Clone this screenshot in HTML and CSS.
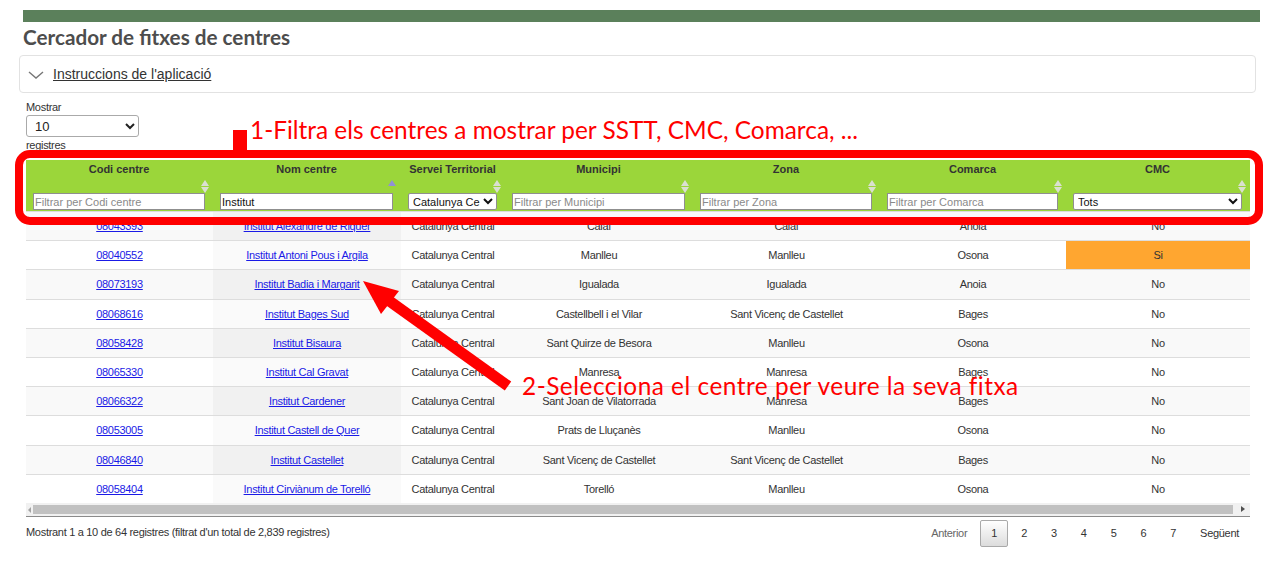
FILE: index.html
```html
<!DOCTYPE html>
<html lang="ca">
<head>
<meta charset="utf-8">
<title>Cercador de fitxes de centres</title>
<link rel="stylesheet" href="styles.css">
</head>
<body>
<div class="page">
  <div class="topbar"></div>
  <h1 class="title">Cercador de fitxes de centres</h1>
  <div class="accordion">
    <svg class="chev" width="16" height="8" viewBox="0 0 16 8"><path d="M1 1 L8 7 L15 1" fill="none" stroke="#777" stroke-width="1.4"/></svg>
    <a class="acc-link" href="#">Instruccions de l'aplicació</a>
  </div>
  <div class="length">
    <span>Mostrar</span>
    <select class="len-select"><option>10</option><option>25</option><option>50</option></select>
    <span>registres</span>
  </div>
  <div class="tablewrap">
    <table class="grid">
      <colgroup>
        <col style="width:187px"><col style="width:188px"><col style="width:104px"><col style="width:188px"><col style="width:187px"><col style="width:186px"><col style="width:184px">
      </colgroup>
      <thead>
        <tr>
          <th class="sort-both"><span class="ttl">Codi centre</span><input class="flt" placeholder="Filtrar per Codi centre"></th>
          <th class="sort-asc"><span class="ttl">Nom centre</span><input class="flt" value="Institut"></th>
          <th class="sort-both"><span class="ttl">Servei Territorial</span><select class="flt fsel"><option>Catalunya Central</option></select></th>
          <th class="sort-both"><span class="ttl">Municipi</span><input class="flt" placeholder="Filtrar per Municipi"></th>
          <th class="sort-both"><span class="ttl">Zona</span><input class="flt" placeholder="Filtrar per Zona"></th>
          <th class="sort-both"><span class="ttl">Comarca</span><input class="flt" placeholder="Filtrar per Comarca"></th>
          <th class="sort-both"><span class="ttl">CMC</span><select class="flt fsel"><option>Tots</option></select></th>
        </tr>
      </thead>
      <tbody>
        <tr><td><a href="#">08043393</a></td><td class="s1"><a href="#">Institut Alexandre de Riquer</a></td><td>Catalunya Central</td><td>Calaf</td><td>Calaf</td><td>Anoia</td><td>No</td></tr>
        <tr><td><a href="#">08040552</a></td><td class="s1"><a href="#">Institut Antoni Pous i Argila</a></td><td>Catalunya Central</td><td>Manlleu</td><td>Manlleu</td><td>Osona</td><td class="si">Si</td></tr>
        <tr><td><a href="#">08073193</a></td><td class="s1"><a href="#">Institut Badia i Margarit</a></td><td>Catalunya Central</td><td>Igualada</td><td>Igualada</td><td>Anoia</td><td>No</td></tr>
        <tr><td><a href="#">08068616</a></td><td class="s1"><a href="#">Institut Bages Sud</a></td><td>Catalunya Central</td><td>Castellbell i el Vilar</td><td>Sant Vicenç de Castellet</td><td>Bages</td><td>No</td></tr>
        <tr><td><a href="#">08058428</a></td><td class="s1"><a href="#">Institut Bisaura</a></td><td>Catalunya Central</td><td>Sant Quirze de Besora</td><td>Manlleu</td><td>Osona</td><td>No</td></tr>
        <tr><td><a href="#">08065330</a></td><td class="s1"><a href="#">Institut Cal Gravat</a></td><td>Catalunya Central</td><td>Manresa</td><td>Manresa</td><td>Bages</td><td>No</td></tr>
        <tr><td><a href="#">08066322</a></td><td class="s1"><a href="#">Institut Cardener</a></td><td>Catalunya Central</td><td>Sant Joan de Vilatorrada</td><td>Manresa</td><td>Bages</td><td>No</td></tr>
        <tr><td><a href="#">08053005</a></td><td class="s1"><a href="#">Institut Castell de Quer</a></td><td>Catalunya Central</td><td>Prats de Lluçanès</td><td>Manlleu</td><td>Osona</td><td>No</td></tr>
        <tr><td><a href="#">08046840</a></td><td class="s1"><a href="#">Institut Castellet</a></td><td>Catalunya Central</td><td>Sant Vicenç de Castellet</td><td>Sant Vicenç de Castellet</td><td>Bages</td><td>No</td></tr>
        <tr><td><a href="#">08058404</a></td><td class="s1"><a href="#">Institut Cirviànum de Torelló</a></td><td>Catalunya Central</td><td>Torelló</td><td>Manlleu</td><td>Osona</td><td>No</td></tr>
      </tbody>
    </table>
    <div class="hscroll">
      <span class="arr-l"></span>
      <span class="thumb"></span>
      <span class="arr-r"></span>
    </div>
  </div>
  <div class="footer">
    <div class="info">Mostrant 1 a 10 de 64 registres (filtrat d'un total de 2,839 registres)</div>
    <div class="paging">
      <a class="pbtn disabled" href="#">Anterior</a>
      <a class="pbtn current" href="#">1</a>
      <a class="pbtn" href="#">2</a>
      <a class="pbtn" href="#">3</a>
      <a class="pbtn" href="#">4</a>
      <a class="pbtn" href="#">5</a>
      <a class="pbtn" href="#">6</a>
      <a class="pbtn" href="#">7</a>
      <a class="pbtn" href="#">Següent</a>
    </div>
  </div>
</div>

<div class="annot">
  <svg class="annot-svg" width="1280" height="564" viewBox="0 0 1280 564">
    <rect x="19" y="154" width="1240" height="67" rx="11" ry="11" fill="none" stroke="#ff0000" stroke-width="8"/>
    <rect x="233" y="130" width="14" height="22" fill="#ff0000"/>
    <line x1="508" y1="386" x2="388" y2="300" stroke="#ff0000" stroke-width="11"/>
    <polygon points="363,281 399,291 381,314" fill="#ff0000"/>
  </svg>
  <div class="note note1">1-Filtra els centres a mostrar per SSTT, CMC, Comarca, ...</div>
  <div class="note note2">2-Selecciona el centre per veure la seva fitxa</div>
</div>
</body>
</html>
```

FILE: styles.css
```css
html, body {
  margin: 0;
  padding: 0;
  background: #ffffff;
}

body {
  font-family: "Liberation Sans", Arial, sans-serif;
  color: #333333;
  position: relative;
  width: 1280px;
  height: 564px;
  overflow: hidden;
}

.page {
  padding-top: 10px;
}

.topbar {
  margin-left: 23px;
  width: 1237px;
  height: 12px;
  background: #5b805b;
}

.title {
  margin: 2px 0 0 23px;
  font: 700 20.7px/26px Lato, "Liberation Sans", sans-serif;
  color: #4d4d4d;
}

.accordion {
  margin: 5px 0 0 19px;
  width: 1237px;
  height: 38px;
  box-sizing: border-box;
  border: 1px solid #e2e2e2;
  border-radius: 4px;
  display: flex;
  align-items: center;
  padding-left: 8px;
  gap: 9px;
}

.chev {
  display: block;
  margin-top: 1px;
}

.acc-link {
  font-size: 14px;
  color: #333333;
  text-decoration: underline;
}

.length {
  margin: 8px 0 0 26px;
  display: flex;
  flex-direction: column;
  align-items: flex-start;
  font-size: 11px;
  line-height: 12px;
  letter-spacing: -0.3px;
  color: #333;
}

.len-select {
  margin: 2px 0;
  width: 113px;
  height: 22px;
  font: 13px "Liberation Sans", Arial, sans-serif;
  padding-left: 4px;
  border: 1px solid #aaaaaa;
  border-radius: 3px;
  background: #ffffff;
  color: #222;
}

.tablewrap {
  margin: 9px 0 0 26px;
  width: 1224px;
}

.grid {
  width: 1224px;
  table-layout: fixed;
  border-collapse: separate;
  border-spacing: 0;
}

.grid th {
  background: #9bd63a;
  padding: 2px 8px 1px 7px;
  vertical-align: top;
  position: relative;
  font-weight: 700;
  font-size: 11px;
  line-height: 14px;
  color: #333333;
  text-align: center;
}

.ttl {
  display: block;
  height: 14px;
  white-space: nowrap;
}

.flt {
  display: block;
  margin-top: 17px;
  width: 100%;
  height: 17px;
  box-sizing: border-box;
  border: 1px solid #8f8f8f;
  border-radius: 0;
  padding: 0 1px;
  font: 11px "Liberation Sans", Arial, sans-serif;
  color: #111;
  background: #ffffff;
  outline: none;
}

.flt::placeholder {
  color: #8a8a8a;
}

.fsel {
  padding: 0;
  font-size: 11px;
  border-radius: 2px;
  color: #111;
}

.sort-both::before,
.sort-both::after,
.sort-asc::before {
  content: "";
  position: absolute;
  right: 4px;
  width: 0;
  height: 0;
  border-left: 4px solid transparent;
  border-right: 4px solid transparent;
}

.sort-both::before {
  top: 20px;
  border-bottom: 6px solid rgba(225, 225, 225, 0.9);
}

.sort-both::after {
  top: 27px;
  border-top: 6px solid rgba(225, 225, 225, 0.9);
}

.sort-asc::before {
  right: 5px;
  top: 20px;
  border-bottom: 6px solid #9191d6;
}

.grid td {
  height: 28.2px;
  padding: 0 6px;
  border-top: 1px solid #dddddd;
  text-align: center;
  vertical-align: middle;
  font-size: 11px;
  line-height: 14px;
  letter-spacing: -0.3px;
  color: #333333;
  white-space: nowrap;
  overflow: hidden;
}

.grid tbody tr:nth-child(odd) td {
  background: #f9f9f9;
}

.grid tbody tr:nth-child(even) td {
  background: #ffffff;
}

.grid tbody tr:nth-child(odd) td.s1 {
  background: #f1f1f1;
}

.grid tbody tr:nth-child(even) td.s1 {
  background: #fafafa;
}

.grid tbody tr td.si {
  background: #ffa630;
}

.grid td a {
  color: #1a1ae6;
  text-decoration: underline;
}

.hscroll {
  height: 13px;
  background: #f1f1f1;
  border-bottom: 1px solid #8a8a8a;
  display: flex;
  align-items: center;
}

.arr-l {
  width: 7px;
  height: 13px;
  position: relative;
}

.arr-l::before {
  content: "";
  position: absolute;
  left: 2px;
  top: 4px;
  border-top: 3px solid transparent;
  border-bottom: 3px solid transparent;
  border-right: 3px solid #a3a3a3;
}

.thumb {
  flex: 1;
  height: 9px;
  background: #c1c1c1;
}

.arr-r {
  width: 17px;
  height: 13px;
  position: relative;
}

.arr-r::before {
  content: "";
  position: absolute;
  left: 8px;
  top: 3px;
  border-top: 3.5px solid transparent;
  border-bottom: 3.5px solid transparent;
  border-left: 4px solid #505050;
}

.footer {
  margin-left: 26px;
  width: 1224px;
  display: flex;
  justify-content: space-between;
  align-items: flex-start;
}

.info {
  padding-top: 8px;
  font-size: 11px;
  line-height: 14px;
  letter-spacing: -0.3px;
  color: #333333;
}

.paging {
  margin-top: 3px;
  display: flex;
}

.pbtn {
  display: block;
  height: 27px;
  box-sizing: border-box;
  border: 1px solid transparent;
  border-radius: 2px;
  padding: 0 10px;
  margin-left: 2px;
  line-height: 25px;
  font-size: 11px;
  letter-spacing: -0.3px;
  color: #333333;
  text-decoration: none;
}

.pbtn.disabled {
  color: #666666;
}

.pbtn.current {
  border-color: #a9a9a9;
  background: linear-gradient(to bottom, #ffffff 0%, #dcdcdc 100%);
}

.annot {
  position: absolute;
  left: 0;
  top: 0;
  width: 1280px;
  height: 564px;
  pointer-events: none;
}

.annot-svg {
  position: absolute;
  left: 0;
  top: 0;
}

.note {
  position: absolute;
  white-space: nowrap;
  font: 400 24.4px/29px Lato, "Open Sans", sans-serif;
  color: #ff0000;
}

.note1 {
  left: 250px;
  top: 115px;
}

.note2 {
  left: 522px;
  top: 371px;
  letter-spacing: 0.5px;
}
```
